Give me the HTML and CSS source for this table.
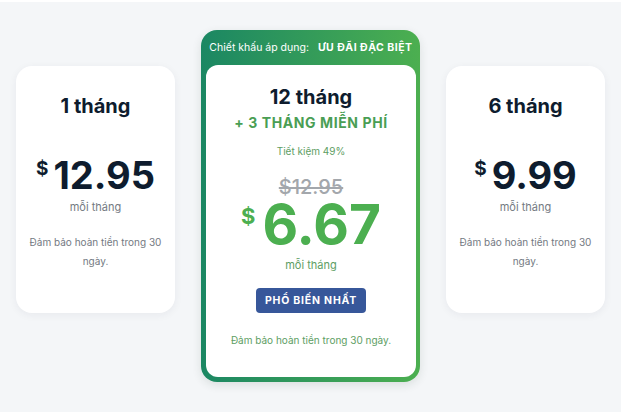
FILE: index.html
```html
<html>

<head>
    <title>Bảng giá</title>
    <meta charset="utf-8">
    <link rel="stylesheet" href="styles.css">
</head>

<body class="body">
    <div class="plans">
        <div class="planCard">
            <div class="planTitle">1 tháng</div>
            <div class="priceRow">
                <span class="priceSign">$</span><span class="priceValue">12.95</span>
            </div>
            <div class="perMonth">mỗi tháng</div>
            <div class="guarantee">Đảm bảo hoàn tiền trong 30 ngày.</div>
        </div>

        <div class="featuredWrap">
            <div class="featuredHead">
                <span class="headLabel">Chiết khấu áp dụng:</span>
                <span class="headDeal">ƯU ĐÃI ĐẶC BIỆT</span>
            </div>
            <div class="featuredCard">
                <div class="planTitle featuredTitle">12 tháng</div>
                <div class="bonus">+ 3 THÁNG MIỄN PHÍ</div>
                <div class="saving">Tiết kiệm 49%</div>
                <div class="oldPrice">$12.95</div>
                <div class="priceRow bigRow">
                    <span class="priceSign bigSign">$</span><span class="priceValue bigValue">6.67</span>
                </div>
                <div class="perMonth greenText">mỗi tháng</div>
                <button class="popularButton">PHỔ BIẾN NHẤT</button>
                <div class="guarantee greenText featuredNote">Đảm bảo hoàn tiền trong 30 ngày.</div>
            </div>
        </div>

        <div class="planCard">
            <div class="planTitle">6 tháng</div>
            <div class="priceRow">
                <span class="priceSign">$</span><span class="priceValue">9.99</span>
            </div>
            <div class="perMonth">mỗi tháng</div>
            <div class="guarantee">Đảm bảo hoàn tiền trong 30 ngày.</div>
        </div>
    </div>
</body>

</html>
```

FILE: styles.css
```css
.body {
    margin: 0;
    border-top: 2px solid #ffffff;
    background-color: #f4f6f8;
    font-family: Inter, "Noto Sans", sans-serif;
    height: 410px;
}

.plans {
    display: flex;
    justify-content: center;
    align-items: flex-start;
    gap: 26px;
    padding-top: 28px;
}

.planCard {
    width: 159px;
    height: 247px;
    box-sizing: border-box;
    margin-top: 36px;
    padding: 28px 11px 0 11px;
    background-color: #ffffff;
    border-radius: 16px;
    box-shadow: 0 2px 8px rgba(30, 40, 60, 0.06);
    text-align: center;
}

.planTitle {
    font-size: 20px;
    line-height: 24px;
    font-weight: 700;
    color: #0e1c2e;
}

.priceRow {
    display: flex;
    justify-content: center;
    align-items: flex-start;
    margin-top: 38px;
    color: #0e1c2e;
}

.priceSign {
    font-size: 19px;
    line-height: 19px;
    font-weight: 700;
    margin-top: 3px;
    margin-right: 5px;
}

.priceValue {
    font-size: 38px;
    line-height: 39px;
    font-weight: 700;
}

.perMonth {
    margin-top: 5px;
    font-size: 11px;
    line-height: 14px;
    color: #747a82;
}

.guarantee {
    margin-top: 19px;
    font-size: 10px;
    line-height: 19px;
    color: #747a82;
}

.featuredWrap {
    width: 219px;
    box-sizing: border-box;
    padding: 0 4px 5px 5px;
    border-radius: 16px;
    background: linear-gradient(90deg, #1b8763, #4caf50);
    box-shadow: 0 3px 10px rgba(30, 60, 40, 0.12);
}

.featuredHead {
    height: 35px;
    display: flex;
    justify-content: center;
    align-items: center;
    gap: 9px;
    color: #ffffff;
    font-size: 10.5px;
    white-space: nowrap;
}

.headDeal {
    font-weight: 700;
    letter-spacing: 0.5px;
}

.featuredCard {
    background-color: #ffffff;
    border-radius: 12px;
    padding: 20px 8px 30px 8px;
    text-align: center;
}

.bonus {
    margin-top: 5px;
    font-size: 14px;
    line-height: 18px;
    font-weight: 700;
    letter-spacing: 0.6px;
    color: #4a9e54;
}

.saving {
    margin-top: 12px;
    font-size: 10px;
    line-height: 14px;
    color: #5e9e64;
}

.oldPrice {
    margin-top: 18px;
    font-size: 20px;
    line-height: 22px;
    font-weight: 500;
    color: #a3a7ac;
    text-decoration: line-through;
}

.bigRow {
    margin-top: 0;
    color: #4caf50;
}

.bigSign {
    font-size: 22px;
    line-height: 22px;
    margin-top: 7px;
    margin-right: 7px;
}

.bigValue {
    font-size: 55px;
    line-height: 53px;
}

.greenText {
    color: #5e9e64;
}

.perMonth.greenText {
    margin-top: 7px;
}

.popularButton {
    margin-top: 16px;
    height: 25px;
    padding: 0 9px;
    border: none;
    border-radius: 4px;
    background-color: #37579a;
    color: #ffffff;
    font-family: Inter, "Noto Sans", sans-serif;
    font-size: 10.5px;
    font-weight: 700;
    letter-spacing: 0.8px;
}

.featuredNote {
    margin-top: 20px;
    line-height: 14px;
}
```
